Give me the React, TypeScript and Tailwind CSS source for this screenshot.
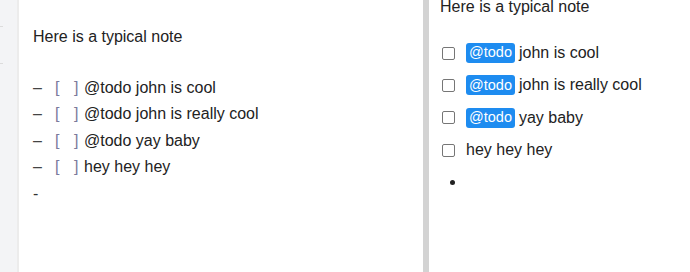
import React from "react";

const rowsLeft = [
  "@todo john is cool",
  "@todo john is really cool",
  "@todo yay baby",
  "hey hey hey",
];

const rowsRight: { tag: boolean; text: string }[] = [
  { tag: true, text: "john is cool" },
  { tag: true, text: "john is really cool" },
  { tag: true, text: "yay baby" },
  { tag: false, text: "hey hey hey" },
];

export default function App() {
  return (
    <div
      className="flex h-[272px] w-[690px] overflow-hidden bg-white text-[16px] text-[#222]"
      style={{ fontFamily: '"Liberation Sans", Arial, sans-serif' }}
    >
      <div className="relative w-[17px] shrink-0 bg-[#f3f4f6]">
        <div className="absolute left-0 top-[26px] h-[1px] w-[3px] bg-[#dcdcdc]" />
        <div className="absolute left-0 top-[63px] h-[1px] w-[3px] bg-[#dcdcdc]" />
      </div>
      <div className="w-[2px] shrink-0 bg-[#ececec]" />
      <div className="w-[404px] shrink-0 pl-[14px] pt-[24px] leading-[26.5px]">
        <div>Here is a typical note</div>
        <div className="h-[24px]" />
        {rowsLeft.map((r) => (
          <div key={r} className="flex whitespace-pre">
            <span className="w-[22px] text-[#444]">–</span>
            <span className="w-[19px] text-[#7a7a9c]">[</span>
            <span className="w-[10px] text-[#7a7a9c]">]</span>
            <span>{r}</span>
          </div>
        ))}
        <div className="text-[#333]">-</div>
      </div>
      <div className="w-[6px] shrink-0 bg-[#d3d3d3]" />
      <div className="flex-1 pl-[11px]">
        <div className="-mt-[5px] leading-[24px]">Here is a typical note</div>
        <div className="h-[18px]" />
        {rowsRight.map((r, i) => (
          <div key={i} className="flex h-[32.33px] items-center">
            <span className="ml-[2px] h-[13px] w-[13px] shrink-0 rounded-[2px] border border-[#767676] bg-white" />
            <span className="ml-[11px] flex items-center whitespace-pre">
              {r.tag && (
                <span className="mr-[4px] inline-flex h-[20px] items-center rounded-[3px] bg-[#1e8cf0] px-[3px] text-[14.5px] text-white">
                  @todo
                </span>
              )}
              <span>{r.text}</span>
            </span>
          </div>
        ))}
        <div className="flex h-[32.33px] items-center">
          <span className="ml-[10px] h-[5px] w-[5px] rounded-full bg-[#222]" />
        </div>
      </div>
    </div>
  );
}
